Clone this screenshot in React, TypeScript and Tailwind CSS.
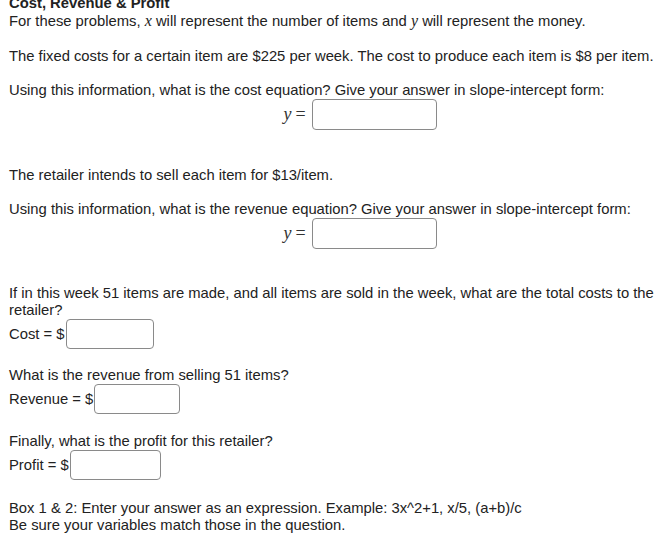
import React from 'react'

const font = { fontFamily: '"Liberation Sans", Arial, sans-serif' }
const serif = { fontFamily: '"Liberation Serif", "Times New Roman", serif' }

function MathY() {
  return (
    <span className="mr-[6px] text-[18px] text-[#333]" style={serif}>
      <i>y</i>
      <span className="ml-[4px]">=</span>
    </span>
  )
}

function Box({ w }: { w: string }) {
  return <span className={`ml-[1px] inline-block h-[30px] rounded-[4px] border border-[#8a8a8a] bg-white ${w}`} />
}

function EqRow() {
  return (
    <div className="flex items-center justify-center pl-[48px]">
      <MathY />
      <span className="inline-block h-[31px] w-[125px] rounded-[4px] border border-[#8a8a8a] bg-white" />
    </div>
  )
}

export default function App() {
  return (
    <div className="min-h-screen overflow-hidden bg-white pl-[9px] text-[14.8px] leading-[17px] text-[#222]" style={font}>
      <div className="-mt-[5px] font-bold">Cost, Revenue &amp; Profit</div>
      <p>
        For these problems, <i style={serif} className="text-[16px]">x</i> will represent the number of items and{' '}
        <i style={serif} className="text-[16px]">y</i> will represent the money.
      </p>

      <p className="mt-[18px] whitespace-nowrap">The fixed costs for a certain item are $225 per week. The cost to produce each item is $8 per item.</p>
      <p className="mt-[17px]">Using this information, what is the cost equation? Give your answer in slope-intercept form:</p>
      <EqRow />

      <p className="mt-[37px]">The retailer intends to sell each item for $13/item.</p>
      <p className="mt-[17px]">Using this information, what is the revenue equation? Give your answer in slope-intercept form:</p>
      <EqRow />

      <p className="mt-[36px] whitespace-nowrap">
        If in this week 51 items are made, and all items are sold in the week, what are the total costs to the
        <br />
        retailer?
      </p>
      <div className="flex items-center">
        <span>Cost = $</span>
        <Box w="w-[88px]" />
      </div>

      <p className="mt-[18px]">What is the revenue from selling 51 items?</p>
      <div className="flex items-center">
        <span>Revenue = $</span>
        <Box w="w-[86px]" />
      </div>

      <p className="mt-[19px]">Finally, what is the profit for this retailer?</p>
      <div className="flex items-center">
        <span>Profit = $</span>
        <Box w="w-[91px]" />
      </div>

      <p className="mt-[20px]">Box 1 &amp; 2: Enter your answer as an expression. Example: 3x^2+1, x/5, (a+b)/c</p>
      <p>Be sure your variables match those in the question.</p>
    </div>
  )
}
